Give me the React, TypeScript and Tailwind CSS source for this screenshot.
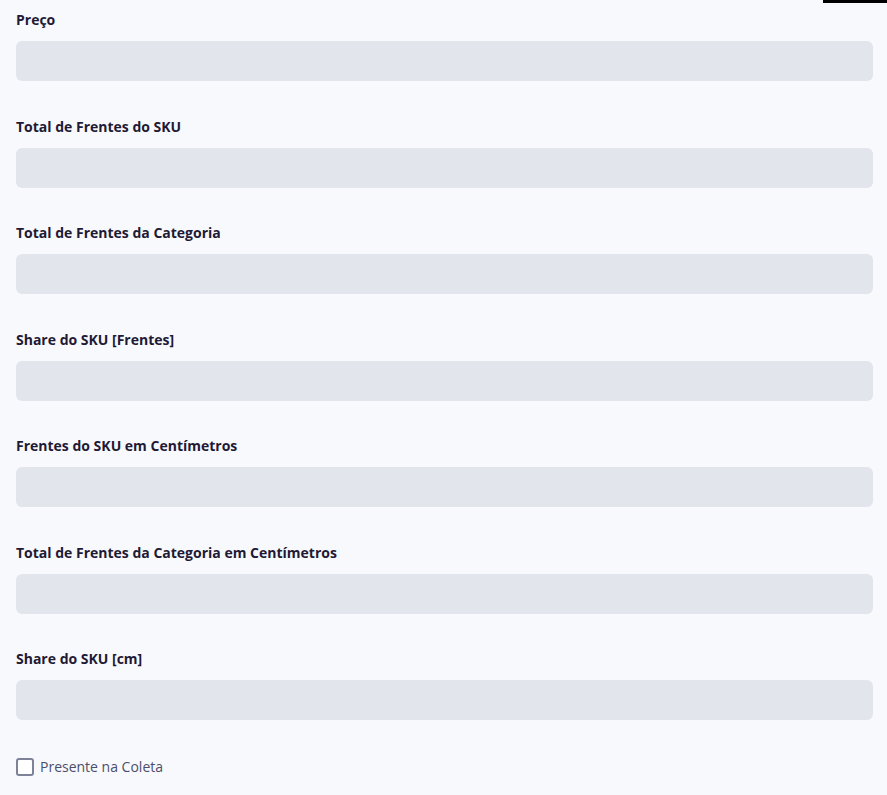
import React from "react";

const FIELDS = [
  "Preço",
  "Total de Frentes do SKU",
  "Total de Frentes da Categoria",
  "Share do SKU [Frentes]",
  "Frentes do SKU em Centímetros",
  "Total de Frentes da Categoria em Centímetros",
  "Share do SKU [cm]",
];

function Field({ label }: { label: string }) {
  return (
    <div className="flex flex-col">
      <label className="text-[14px] leading-[21px] font-bold text-[#1f1a35] mb-[11px]">
        {label}
      </label>
      <input
        type="text"
        readOnly
        className="h-[40px] w-full rounded-[6px] bg-[#e3e5ed] outline-none border-0"
      />
    </div>
  );
}

export default function App() {
  return (
    <div
      className="relative min-h-[795px] w-full bg-[#f8f9fc]"
      style={{ fontFamily: '"Open Sans", "Liberation Sans", sans-serif' }}
    >
      <div className="absolute right-0 top-0 h-[3px] w-[64px] bg-black" />
      <div className="flex flex-col gap-[34.5px] pl-[16px] pr-[14px] pt-[9px]">
        {FIELDS.map((f) => (
          <Field key={f} label={f} />
        ))}
      </div>
      <label className="mt-[36px] ml-[16px] flex items-center gap-[6px] text-[14px] text-[#4b4f6b]">
        <span className="h-[18px] w-[18px] rounded-[3px] border-[2px] border-[#7d8299] bg-white" />
        Presente na Coleta
      </label>
    </div>
  );
}
